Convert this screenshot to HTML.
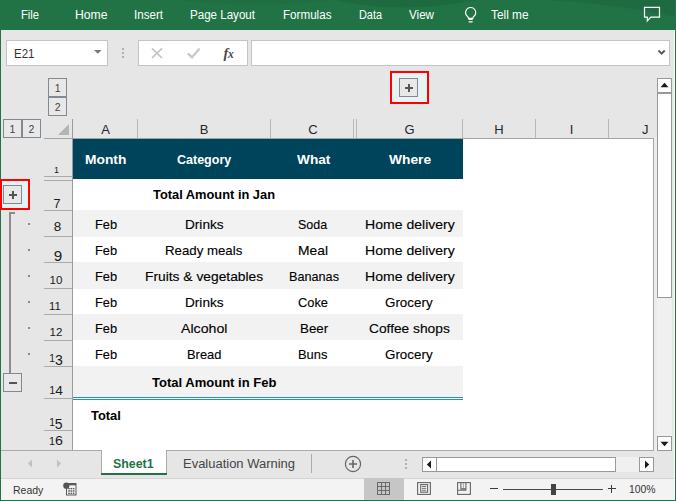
<!DOCTYPE html><html><head><meta charset="utf-8"><title>Excel</title><style>

html,body{margin:0;padding:0}
body{width:676px;height:501px;overflow:hidden;position:relative;background:#e6e6e6;font-family:"Liberation Sans",sans-serif}
.a{position:absolute}
.t{position:absolute;white-space:nowrap;line-height:1;transform-origin:0 0}
.ob{position:absolute;box-sizing:border-box;border:1px solid #838993;background:#e8e8e8}

</style></head><body>
<!-- ribbon -->
<div class="a" style="left:0;top:0;width:676px;height:30px;background:#217346;overflow:hidden">
<svg class="a" style="left:0;top:0" width="676" height="30" viewBox="0 0 676 30"><path d="M335 0Q400 15 478 0z" fill="#1d6a40"/><path d="M175 0Q260 9 335 0z" fill="#1f6f43"/><path d="M545 0Q610 3 676 17V0z" fill="#1e6b41"/></svg>
</div>
<!-- window borders -->
<div class="a" style="left:0;top:0;width:1.25px;height:501px;background:#217346"></div>
<div class="a" style="left:674.1px;top:30px;width:0.8px;height:470px;background:#fafafa"></div>
<div class="a" style="left:674.8px;top:0;width:1.2px;height:501px;background:#217346"></div>
<div class="a" style="left:0;top:499.6px;width:676px;height:1.4px;background:#217346"></div>

<!-- lightbulb -->
<svg class="a" style="left:463px;top:4px" width="16" height="22" viewBox="0 0 16 22" fill="none" stroke="#fff" stroke-width="1.15">
  <path d="M7.65 3.5a5 5 0 0 0-3 9c.55.5.8 1 .8 1.9h4.4c0-.9.25-1.4.8-1.9a5 5 0 0 0-3-9z"/>
  <path d="M5.5 15.3h4.3M5.7 17.9h3.9" stroke-width="1.2"/>
</svg>
<!-- comment icon -->
<svg class="a" style="left:643px;top:6px" width="19" height="18" viewBox="0 0 19 18" fill="none" stroke="#fff" stroke-width="1.2">
  <path d="M1.5 1.4h15v9.8H7.8L4.3 15v-3.8H1.5z"/>
</svg>

<!-- formula bar -->
<div class="a" style="left:6px;top:40px;width:102px;height:26px;box-sizing:border-box;border:1px solid #c3c3c3;background:#fff"></div>
<svg class="a" style="left:93px;top:49px" width="10" height="6" viewBox="0 0 10 6"><path d="M1 1h7.6L4.8 4.8z" fill="#777"/></svg>
<div class="a" style="left:122px;top:48px;width:2px;height:2px;background:#b0b0b0"></div>
<div class="a" style="left:122px;top:52px;width:2px;height:2px;background:#b0b0b0"></div>
<div class="a" style="left:122px;top:56px;width:2px;height:2px;background:#b0b0b0"></div>
<div class="a" style="left:138px;top:40px;width:110px;height:26px;box-sizing:border-box;border:1px solid #c3c3c3;background:#fff"></div>
<svg class="a" style="left:151px;top:47px" width="12" height="12" viewBox="0 0 12 12" stroke="#c3c3c3" stroke-width="1.7" fill="none"><path d="M1 1.4l10 9.6M11 1.4L1 11"/></svg>
<svg class="a" style="left:186px;top:47px" width="15" height="12" viewBox="0 0 15 12" stroke="#c9c9c9" stroke-width="2.3" fill="none"><path d="M1.8 6.3l4.2 4L13.6 1.6"/></svg>
<div class="t" style="left:223.5px;top:45.6px;font-family:'Liberation Serif',serif;font-style:italic;font-size:14.5px;color:#4a4a4a;font-weight:700;letter-spacing:-0.4px">f<span style="font-size:11.5px;position:relative;top:0.3px">x</span></div>
<div class="a" style="left:251px;top:40px;width:418.8px;height:26px;box-sizing:border-box;border:1px solid #c3c3c3;background:#fff"></div>
<svg class="a" style="left:657px;top:49px" width="10" height="7" viewBox="0 0 10 7" stroke="#5a5a5a" stroke-width="1.9" fill="none"><path d="M1.5 1.5l3.1 3.2 3.1-3.2"/></svg>

<!-- sheet white area -->
<div class="a" style="left:72px;top:138px;width:581px;height:312px;background:#fff"></div>
<!-- table -->
<div class="a" style="left:73px;top:139px;width:389.5px;height:39.5px;background:#00445c"></div>
<div class="a" style="left:73px;top:210px;width:389.5px;height:26.6px;background:#f2f2f2"></div>
<div class="a" style="left:73px;top:262.2px;width:389.5px;height:26.4px;background:#f2f2f2"></div>
<div class="a" style="left:73px;top:314.1px;width:389.5px;height:26.4px;background:#f2f2f2"></div>
<div class="a" style="left:73px;top:366.3px;width:389.5px;height:30.7px;background:#f2f2f2"></div>
<div class="a" style="left:73px;top:397px;width:389.5px;height:1px;background:#2191c0"></div>
<div class="a" style="left:73px;top:399px;width:389.5px;height:1px;background:#2191c0"></div>

<!-- header lines -->
<div class="a" style="left:44px;top:138px;width:610px;height:1px;background:#a3a3a3"></div>
<div class="a" style="left:654px;top:138px;width:3px;height:313px;background:#ececec"></div>
<div class="a" style="left:72px;top:119px;width:1px;height:331px;background:#9b9b9b"></div>
<div class="a" style="left:653px;top:138px;width:1px;height:313px;background:#a6a6a6"></div>
<div class="a" style="left:1.2px;top:450px;width:652.8px;height:1px;background:#ababab"></div>
<!-- select-all triangle -->
<svg class="a" style="left:57px;top:122.8px" width="13" height="13" viewBox="0 0 13 13"><path d="M12 1v11H1z" fill="#b4b4b4"/></svg>
<div class="a" style="left:137px;top:119px;width:1px;height:19px;background:#b8b8b8"></div>
<div class="a" style="left:270px;top:119px;width:1px;height:19px;background:#b8b8b8"></div>
<div class="a" style="left:353px;top:119px;width:1px;height:19px;background:#b8b8b8"></div>
<div class="a" style="left:356px;top:119px;width:1px;height:19px;background:#b8b8b8"></div>
<div class="a" style="left:462px;top:119px;width:1px;height:19px;background:#b8b8b8"></div>
<div class="a" style="left:535px;top:119px;width:1px;height:19px;background:#b8b8b8"></div>
<div class="a" style="left:608px;top:119px;width:1px;height:19px;background:#b8b8b8"></div>
<div class="a" style="left:44px;top:176px;width:28px;height:1px;background:#ababab"></div>
<div class="a" style="left:44px;top:179.5px;width:28px;height:1px;background:#ababab"></div>
<div class="a" style="left:44px;top:210px;width:28px;height:1px;background:#ababab"></div>
<div class="a" style="left:44px;top:236px;width:28px;height:1px;background:#ababab"></div>
<div class="a" style="left:44px;top:262px;width:28px;height:1px;background:#ababab"></div>
<div class="a" style="left:44px;top:288px;width:28px;height:1px;background:#ababab"></div>
<div class="a" style="left:44px;top:314px;width:28px;height:1px;background:#ababab"></div>
<div class="a" style="left:44px;top:340px;width:28px;height:1px;background:#ababab"></div>
<div class="a" style="left:44px;top:366px;width:28px;height:1px;background:#ababab"></div>
<div class="a" style="left:44px;top:398px;width:28px;height:1px;background:#ababab"></div>
<div class="a" style="left:44px;top:430px;width:28px;height:1px;background:#ababab"></div>
<div class="ob" style="left:48px;top:78px;width:19px;height:19px"></div>
<div class="ob" style="left:48px;top:97px;width:19px;height:19px"></div>
<div class="ob" style="left:3px;top:119.2px;width:19px;height:18.8px"></div>
<div class="ob" style="left:22px;top:119.2px;width:19px;height:18.8px"></div>
<div class="a" style="left:390px;top:71px;width:39px;height:33px;box-sizing:border-box;border:2px solid #f00;background:#e8f3f3"></div>
<div class="ob" style="left:399px;top:78px;width:19px;height:19px"></div>
<div class="a" style="left:405px;top:87px;width:8px;height:2px;background:#555"></div><div class="a" style="left:408px;top:84px;width:2px;height:8px;background:#555"></div>
<div class="a" style="left:0px;top:179px;width:30px;height:30.5px;box-sizing:border-box;border:2px solid #f00;background:#e8f1f1"></div>
<div class="ob" style="left:3.3px;top:185px;width:19px;height:19px"></div>
<div class="a" style="left:8.8px;top:193.5px;width:8px;height:2px;background:#555"></div><div class="a" style="left:11.8px;top:190.5px;width:2px;height:8px;background:#555"></div>
<div class="a" style="left:9.3px;top:212.2px;width:1.8px;height:161px;background:#8c8c8c"></div>
<div class="a" style="left:9.3px;top:212.2px;width:5.7px;height:1.8px;background:#8c8c8c"></div>
<div class="ob" style="left:3.3px;top:373px;width:19px;height:19px"></div>
<div class="a" style="left:8.8px;top:381.5px;width:8px;height:2px;background:#555"></div>
<div class="a" style="left:28px;top:223.0px;width:2px;height:2px;background:#8a8a8a"></div>
<div class="a" style="left:28px;top:249.0px;width:2px;height:2px;background:#8a8a8a"></div>
<div class="a" style="left:28px;top:275.0px;width:2px;height:2px;background:#8a8a8a"></div>
<div class="a" style="left:28px;top:301.0px;width:2px;height:2px;background:#8a8a8a"></div>
<div class="a" style="left:28px;top:327.0px;width:2px;height:2px;background:#8a8a8a"></div>
<div class="a" style="left:28px;top:353.0px;width:2px;height:2px;background:#8a8a8a"></div>
<!-- vertical scrollbar -->
<div class="a" style="left:657px;top:78px;width:15px;height:373px;background:#f0f0f0"></div>
<div class="a" style="left:657px;top:78px;width:15px;height:15px;box-sizing:border-box;border:1px solid #999;background:#fff"></div>
<svg class="a" style="left:660px;top:82px" width="9" height="6" viewBox="0 0 9 6"><path d="M0.5 5.2L4.5 0.8l4 4.4z" fill="#1a1a1a"/></svg>
<div class="a" style="left:657px;top:93px;width:15px;height:205px;box-sizing:border-box;border:1px solid #999;background:#fff"></div>
<div class="a" style="left:657px;top:436px;width:15px;height:15px;box-sizing:border-box;border:1px solid #999;background:#fff"></div>
<svg class="a" style="left:660px;top:441px" width="9" height="6" viewBox="0 0 9 6"><path d="M0.5 0.8L4.5 5.2l4-4.4z" fill="#1a1a1a"/></svg>

<!-- tab bar -->
<div class="a" style="left:101px;top:450px;width:66px;height:22.5px;box-sizing:border-box;border-left:1px solid #ababab;border-right:1px solid #ababab;background:#fff"></div>
<div class="a" style="left:101px;top:472.5px;width:66px;height:2px;background:#217346"></div>
<svg class="a" style="left:27px;top:459px" width="6" height="9" viewBox="0 0 6 9"><path d="M5 0.5v8L0.8 4.5z" fill="#c2c2c2"/></svg>
<svg class="a" style="left:56px;top:459px" width="6" height="9" viewBox="0 0 6 9"><path d="M1 0.5v8L5.2 4.5z" fill="#c2c2c2"/></svg>
<div class="a" style="left:311px;top:454px;width:1px;height:19px;background:#ababab"></div>
<svg class="a" style="left:344px;top:455px" width="18" height="18" viewBox="0 0 18 18" fill="none" stroke="#666" stroke-width="1.2"><circle cx="9" cy="9" r="7.6"/><path d="M9 5v8M5 9h8" stroke-width="1.6"/></svg>
<div class="a" style="left:405px;top:459px;width:2px;height:2px;background:#b0b0b0"></div>
<div class="a" style="left:405px;top:463px;width:2px;height:2px;background:#b0b0b0"></div>
<div class="a" style="left:405px;top:467px;width:2px;height:2px;background:#b0b0b0"></div>
<!-- horizontal scrollbar -->
<div class="a" style="left:422px;top:457px;width:231px;height:14.5px;background:#f0f0f0"></div>
<div class="a" style="left:422px;top:457px;width:15px;height:14.5px;box-sizing:border-box;border:1px solid #999;background:#fff"></div>
<svg class="a" style="left:426px;top:460px" width="6" height="9" viewBox="0 0 6 9"><path d="M5 0.5v8L0.8 4.5z" fill="#1a1a1a"/></svg>
<div class="a" style="left:436px;top:457px;width:180px;height:14.5px;box-sizing:border-box;border:1px solid #999;background:#fff"></div>
<div class="a" style="left:639px;top:457px;width:14.5px;height:14.5px;box-sizing:border-box;border:1px solid #999;background:#fff"></div>
<svg class="a" style="left:644px;top:460px" width="6" height="9" viewBox="0 0 6 9"><path d="M1 0.5v8L5.2 4.5z" fill="#1a1a1a"/></svg>

<!-- status bar -->
<div class="a" style="left:1.2px;top:478px;width:673px;height:21.7px;background:#f3f3f3"></div>
<div class="a" style="left:1.2px;top:478px;width:673px;height:1px;background:#d4d4d4"></div>
<div class="a" style="left:364px;top:478px;width:40px;height:21.6px;background:#c6c6c6"></div>
<!-- macro icon -->
<svg class="a" style="left:63px;top:481.5px" width="14" height="14" viewBox="0 0 14 14" fill="none" stroke="#5a5a5a" stroke-width="1"><rect x="3.5" y="1.5" width="9.5" height="11.5"/><rect x="3.5" y="1.3" width="9.5" height="2" fill="#5a5a5a" stroke="none"/><path d="M5.2 6.7h1.6M7.5 6.7h1.6M9.8 6.7h1.6M5.2 9h1.6M7.5 9h1.6M9.8 9h1.6M5.2 11.3h1.6M7.5 11.3h1.6M9.8 11.3h1.6" stroke-width="1.3"/><circle cx="3.3" cy="3.7" r="3.1" fill="#555" stroke="none"/></svg>
<!-- view icons -->
<svg class="a" style="left:376px;top:481px" width="15" height="15" viewBox="0 0 15 15" fill="none" stroke="#6a6a6a" stroke-width="1"><path d="M1.5 1v13M5.5 1v13M9.5 1v13M13.5 1v13M1 1.5h13M1 5.5h13M1 9.5h13M1 13.5h13"/></svg>
<svg class="a" style="left:417px;top:482px" width="14" height="13" viewBox="0 0 14 13" fill="none" stroke="#666" stroke-width="1.1"><rect x="0.6" y="0.6" width="12.8" height="11.8"/><rect x="3.7" y="2.6" width="6.9" height="7.6"/><path d="M5 4.5h4.2M5 6.4h4.2M5 8.3h4.2" stroke-width="0.9"/></svg>
<svg class="a" style="left:457px;top:482px" width="14" height="13" viewBox="0 0 14 13" fill="none" stroke="#666" stroke-width="1.1"><rect x="0.6" y="0.6" width="12.8" height="11.8"/><path d="M3.9 0.6v6.3h5M8.9 0.6v7.6H0.6"/><path d="M6.4 0.6v6.3" opacity=".5"/></svg>
<!-- zoom slider -->
<div class="a" style="left:490px;top:488px;width:8px;height:1px;background:#3c3c3c"></div>
<div class="a" style="left:503px;top:489px;width:100px;height:1px;background:#4a4a4a"></div>
<div class="a" style="left:551px;top:484px;width:5px;height:10.6px;background:#444"></div>
<div class="a" style="left:608px;top:488px;width:8px;height:1px;background:#3c3c3c"></div>
<div class="a" style="left:611px;top:484.5px;width:1px;height:8.5px;background:#3c3c3c"></div>

<div class="t" id="t0" style="font-size:12px;font-weight:400;color:#fff;top:8.84px;left:21.00px;transform:scaleX(0.9305);">File</div>
<div class="t" id="t1" style="font-size:12px;font-weight:400;color:#fff;top:8.84px;left:74.50px;transform:scaleX(1.0151);">Home</div>
<div class="t" id="t2" style="font-size:12px;font-weight:400;color:#fff;top:8.84px;left:134.00px;transform:scaleX(0.9662);">Insert</div>
<div class="t" id="t3" style="font-size:12px;font-weight:400;color:#fff;top:8.84px;left:190.00px;transform:scaleX(0.9645);">Page Layout</div>
<div class="t" id="t4" style="font-size:12px;font-weight:400;color:#fff;top:8.84px;left:282.50px;transform:scaleX(0.9697);">Formulas</div>
<div class="t" id="t5" style="font-size:12px;font-weight:400;color:#fff;top:8.84px;left:359.00px;transform:scaleX(0.9070);">Data</div>
<div class="t" id="t6" style="font-size:12px;font-weight:400;color:#fff;top:8.84px;left:409.00px;transform:scaleX(0.9691);">View</div>
<div class="t" id="t7" style="font-size:12px;font-weight:400;color:#fff;top:8.84px;left:490.50px;transform:scaleX(0.9864);">Tell me</div>
<div class="t" id="t8" style="font-size:12px;font-weight:400;color:#333;top:48.34px;left:13.50px;transform:scaleX(0.9598);">E21</div>
<div class="t" id="t9" style="font-size:13px;font-weight:400;color:#262626;top:122.90px;left:105.50px;width:0;display:flex;justify-content:center;"><span>A</span></div>
<div class="t" id="t10" style="font-size:13px;font-weight:400;color:#262626;top:122.90px;left:204.00px;width:0;display:flex;justify-content:center;"><span>B</span></div>
<div class="t" id="t11" style="font-size:13px;font-weight:400;color:#262626;top:122.90px;left:313.00px;width:0;display:flex;justify-content:center;"><span>C</span></div>
<div class="t" id="t12" style="font-size:13px;font-weight:400;color:#262626;top:122.90px;left:409.50px;width:0;display:flex;justify-content:center;"><span>G</span></div>
<div class="t" id="t13" style="font-size:13px;font-weight:400;color:#262626;top:122.90px;left:499.00px;width:0;display:flex;justify-content:center;"><span>H</span></div>
<div class="t" id="t14" style="font-size:13px;font-weight:400;color:#262626;top:122.90px;left:571.50px;width:0;display:flex;justify-content:center;"><span>I</span></div>
<div class="t" id="t15" style="font-size:13px;font-weight:400;color:#262626;top:122.90px;left:645.30px;width:0;display:flex;justify-content:center;"><span>J</span></div>
<div class="t" id="t16" style="font-size:13.5px;font-weight:700;color:#fff;top:153.17px;left:84.60px;transform:scaleX(1.0201);">Month</div>
<div class="t" id="t17" style="font-size:13.5px;font-weight:700;color:#fff;top:153.17px;left:177.40px;transform:scaleX(0.9262);">Category</div>
<div class="t" id="t18" style="font-size:13.5px;font-weight:700;color:#fff;top:153.17px;left:296.50px;transform:scaleX(1.0121);">What</div>
<div class="t" id="t19" style="font-size:13.5px;font-weight:700;color:#fff;top:153.17px;left:388.70px;transform:scaleX(1.0202);">Where</div>
<div class="t" id="t20" style="font-size:13.5px;font-weight:700;color:#000;top:187.67px;left:153.00px;transform:scaleX(0.9513);">Total Amount in Jan</div>
<div class="t" id="t21" style="font-size:13px;font-weight:400;color:#000;top:218.30px;-webkit-text-stroke:0.12px #000;left:94.80px;transform:scaleX(0.9863);">Feb</div>
<div class="t" id="t22" style="font-size:13px;font-weight:400;color:#000;top:218.30px;-webkit-text-stroke:0.12px #000;left:185.20px;transform:scaleX(1.0477);">Drinks</div>
<div class="t" id="t23" style="font-size:13px;font-weight:400;color:#000;top:218.30px;-webkit-text-stroke:0.12px #000;left:298.30px;transform:scaleX(0.9580);">Soda</div>
<div class="t" id="t24" style="font-size:13px;font-weight:400;color:#000;top:218.30px;-webkit-text-stroke:0.12px #000;left:364.80px;transform:scaleX(1.0807);">Home delivery</div>
<div class="t" id="t25" style="font-size:13px;font-weight:400;color:#000;top:244.30px;-webkit-text-stroke:0.12px #000;left:94.80px;transform:scaleX(0.9863);">Feb</div>
<div class="t" id="t26" style="font-size:13px;font-weight:400;color:#000;top:244.30px;-webkit-text-stroke:0.12px #000;left:165.40px;transform:scaleX(1.0188);">Ready meals</div>
<div class="t" id="t27" style="font-size:13px;font-weight:400;color:#000;top:244.30px;-webkit-text-stroke:0.12px #000;left:298.30px;transform:scaleX(1.0643);">Meal</div>
<div class="t" id="t28" style="font-size:13px;font-weight:400;color:#000;top:244.30px;-webkit-text-stroke:0.12px #000;left:364.80px;transform:scaleX(1.0807);">Home delivery</div>
<div class="t" id="t29" style="font-size:13px;font-weight:400;color:#000;top:270.30px;-webkit-text-stroke:0.12px #000;left:94.80px;transform:scaleX(0.9863);">Feb</div>
<div class="t" id="t30" style="font-size:13px;font-weight:400;color:#000;top:270.30px;-webkit-text-stroke:0.12px #000;left:145.40px;transform:scaleX(1.0622);">Fruits &amp; vegetables</div>
<div class="t" id="t31" style="font-size:13px;font-weight:400;color:#000;top:270.30px;-webkit-text-stroke:0.12px #000;left:288.50px;transform:scaleX(0.9741);">Bananas</div>
<div class="t" id="t32" style="font-size:13px;font-weight:400;color:#000;top:270.30px;-webkit-text-stroke:0.12px #000;left:364.80px;transform:scaleX(1.0807);">Home delivery</div>
<div class="t" id="t33" style="font-size:13px;font-weight:400;color:#000;top:296.30px;-webkit-text-stroke:0.12px #000;left:94.80px;transform:scaleX(0.9863);">Feb</div>
<div class="t" id="t34" style="font-size:13px;font-weight:400;color:#000;top:296.30px;-webkit-text-stroke:0.12px #000;left:185.20px;transform:scaleX(1.0477);">Drinks</div>
<div class="t" id="t35" style="font-size:13px;font-weight:400;color:#000;top:296.30px;-webkit-text-stroke:0.12px #000;left:298.30px;transform:scaleX(0.9882);">Coke</div>
<div class="t" id="t36" style="font-size:13px;font-weight:400;color:#000;top:296.30px;-webkit-text-stroke:0.12px #000;left:385.20px;transform:scaleX(1.0295);">Grocery</div>
<div class="t" id="t37" style="font-size:13px;font-weight:400;color:#000;top:322.30px;-webkit-text-stroke:0.12px #000;left:94.80px;transform:scaleX(0.9863);">Feb</div>
<div class="t" id="t38" style="font-size:13px;font-weight:400;color:#000;top:322.30px;-webkit-text-stroke:0.12px #000;left:181.30px;transform:scaleX(1.0882);">Alcohol</div>
<div class="t" id="t39" style="font-size:13px;font-weight:400;color:#000;top:322.30px;-webkit-text-stroke:0.12px #000;left:299.50px;transform:scaleX(1.0266);">Beer</div>
<div class="t" id="t40" style="font-size:13px;font-weight:400;color:#000;top:322.30px;-webkit-text-stroke:0.12px #000;left:369.30px;transform:scaleX(1.0579);">Coffee shops</div>
<div class="t" id="t41" style="font-size:13px;font-weight:400;color:#000;top:348.30px;-webkit-text-stroke:0.12px #000;left:94.80px;transform:scaleX(0.9863);">Feb</div>
<div class="t" id="t42" style="font-size:13px;font-weight:400;color:#000;top:348.30px;-webkit-text-stroke:0.12px #000;left:186.70px;transform:scaleX(0.9913);">Bread</div>
<div class="t" id="t43" style="font-size:13px;font-weight:400;color:#000;top:348.30px;-webkit-text-stroke:0.12px #000;left:298.30px;transform:scaleX(0.9919);">Buns</div>
<div class="t" id="t44" style="font-size:13px;font-weight:400;color:#000;top:348.30px;-webkit-text-stroke:0.12px #000;left:385.20px;transform:scaleX(1.0295);">Grocery</div>
<div class="t" id="t45" style="font-size:13.5px;font-weight:700;color:#000;top:375.67px;left:152.20px;transform:scaleX(0.9645);">Total Amount in Feb</div>
<div class="t" id="t46" style="font-size:13.5px;font-weight:700;color:#000;top:408.57px;left:90.60px;transform:scaleX(0.9568);">Total</div>
<div class="t" id="t47" style="font-size:10.5px;font-weight:400;color:#444;top:83.11px;left:57.60px;width:0;display:flex;justify-content:center;"><span>1</span></div>
<div class="t" id="t48" style="font-size:10.5px;font-weight:400;color:#444;top:102.21px;left:57.60px;width:0;display:flex;justify-content:center;"><span>2</span></div>
<div class="t" id="t49" style="font-size:10.5px;font-weight:400;color:#444;top:124.41px;left:12.40px;width:0;display:flex;justify-content:center;"><span>1</span></div>
<div class="t" id="t50" style="font-size:10.5px;font-weight:400;color:#444;top:124.41px;left:31.40px;width:0;display:flex;justify-content:center;"><span>2</span></div>
<div class="t" id="t51" style="font-size:13px;font-weight:700;color:#217346;top:457.10px;left:113.00px;transform:scaleX(0.9521);">Sheet1</div>
<div class="t" id="t52" style="font-size:12.5px;font-weight:400;color:#444;top:457.52px;left:183.00px;transform:scaleX(1.0376);">Evaluation Warning</div>
<div class="t" id="t53" style="font-size:11px;font-weight:400;color:#333;top:484.59px;left:12.60px;transform:scaleX(0.9529);">Ready</div>
<div class="t" id="t54" style="font-size:11px;font-weight:400;color:#333;top:484.19px;left:629.40px;transform:scaleX(0.9453);">100%</div>
<div class="a" style="left:36.40px;width:40px;top:159.40px;height:20px;text-align:center;color:#1a1a1a;font-size:13px;line-height:20px;white-space:nowrap;transform:scaleX(1)"><span style="font-size:9px;line-height:0;position:relative;top:0px;letter-spacing:0px">1</span></div>
<div class="a" style="left:36.90px;width:40px;top:192.50px;height:20px;text-align:center;color:#1a1a1a;font-size:13px;line-height:20px;white-space:nowrap;transform:scaleX(1)"><span style="font-size:12.5px;line-height:0;position:relative;top:1.9px;letter-spacing:0px">7</span></div>
<div class="a" style="left:37.60px;width:40px;top:217.30px;height:20px;text-align:center;color:#1a1a1a;font-size:13px;line-height:20px;white-space:nowrap;transform:scaleX(1)"><span style="font-size:13.5px;line-height:0;position:relative;top:0px;letter-spacing:0px">8</span></div>
<div class="a" style="left:38.00px;width:40px;top:244.00px;height:20px;text-align:center;color:#1a1a1a;font-size:13px;line-height:20px;white-space:nowrap;transform:scaleX(1.05)"><span style="font-size:14.5px;line-height:0;position:relative;top:3px;letter-spacing:0px">9</span></div>
<div class="a" style="left:36.00px;width:40px;top:269.80px;height:20px;text-align:center;color:#1a1a1a;font-size:13px;line-height:20px;white-space:nowrap;transform:scaleX(1.12)"><span style="font-size:10.3px;line-height:0;position:relative;top:0px;letter-spacing:0px">1</span><span style="font-size:10.3px;line-height:0;position:relative;top:0px;letter-spacing:0px">0</span></div>
<div class="a" style="left:35.10px;width:40px;top:295.80px;height:20px;text-align:center;color:#1a1a1a;font-size:13px;line-height:20px;white-space:nowrap;transform:scaleX(1.1)"><span style="font-size:10.3px;line-height:0;position:relative;top:0px;letter-spacing:0px">1</span><span style="font-size:10.3px;line-height:0;position:relative;top:0px;letter-spacing:0px">1</span></div>
<div class="a" style="left:36.10px;width:40px;top:321.70px;height:20px;text-align:center;color:#1a1a1a;font-size:13px;line-height:20px;white-space:nowrap;transform:scaleX(1.12)"><span style="font-size:10.3px;line-height:0;position:relative;top:0px;letter-spacing:0px">1</span><span style="font-size:10.3px;line-height:0;position:relative;top:0px;letter-spacing:0px">2</span></div>
<div class="a" style="left:36.00px;width:40px;top:347.70px;height:20px;text-align:center;color:#1a1a1a;font-size:13px;line-height:20px;white-space:nowrap;transform:scaleX(1.0)"><span style="font-size:10.3px;line-height:0;position:relative;top:0px;letter-spacing:0px">1</span><span style="font-size:14px;line-height:0;position:relative;top:3px;letter-spacing:0px">3</span></div>
<div class="a" style="left:36.10px;width:40px;top:379.50px;height:20px;text-align:center;color:#1a1a1a;font-size:13px;line-height:20px;white-space:nowrap;transform:scaleX(1.05)"><span style="font-size:10.3px;line-height:0;position:relative;top:0px;letter-spacing:0px">1</span><span style="font-size:13px;line-height:0;position:relative;top:1.4px;letter-spacing:0px">4</span></div>
<div class="a" style="left:35.90px;width:40px;top:411.70px;height:20px;text-align:center;color:#1a1a1a;font-size:13px;line-height:20px;white-space:nowrap;transform:scaleX(1.0)"><span style="font-size:10.3px;line-height:0;position:relative;top:0px;letter-spacing:0px">1</span><span style="font-size:14px;line-height:0;position:relative;top:3px;letter-spacing:0px">5</span></div>
<div class="a" style="left:36.20px;width:40px;top:431.10px;height:20px;text-align:center;color:#1a1a1a;font-size:13px;line-height:20px;white-space:nowrap;transform:scaleX(1.05)"><span style="font-size:10.3px;line-height:0;position:relative;top:0px;letter-spacing:0px">1</span><span style="font-size:13.5px;line-height:0;position:relative;top:0px;letter-spacing:0px">6</span></div>
</body></html>
